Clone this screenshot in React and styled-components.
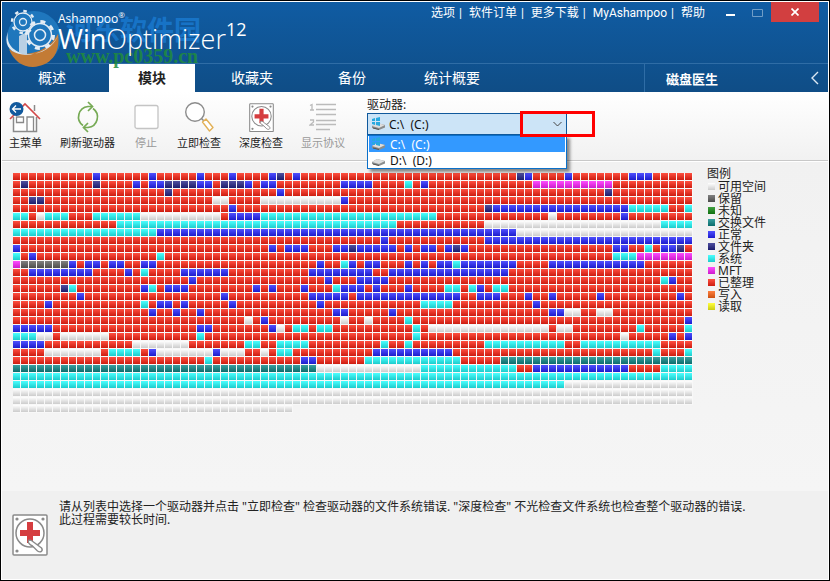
import React from 'react'
import styled, { createGlobalStyle } from 'styled-components'

const GlobalStyle = createGlobalStyle`
  * {
    box-sizing: border-box;
  }
  body {
    margin: 0;
    background: #000;
    color: #222;
    font-family: 'Noto Sans', 'Noto Sans CJK SC', sans-serif;
    font-size: 12px;
  }
  button {
    border: 0;
    padding: 0;
    background: none;
    font: inherit;
  }
  a {
    color: inherit;
    text-decoration: none;
  }
  svg {
    display: block;
  }
`

const Frame = styled.div`
  display: flex;
  flex-direction: column;
  min-height: 100vh;
  border: 1px solid #000;
  padding: 1px;
  background: #fff;
`

const Header = styled.header`
  position: relative;
  background: linear-gradient(#105ca3, #0f4d86);
  color: #fff;
`

const TopBar = styled.div`
  display: flex;
  justify-content: space-between;
  align-items: flex-start;
  height: 61px;
  padding-right: 9px;
`

const Brand = styled.div`
  z-index: 1;
  padding: 9px 0 0 56px;
  font-family: 'Open Sans', sans-serif;
`

const Maker = styled.div`
  font-size: 12px;
  line-height: 14px;

  sup {
    font-size: 8px;
    line-height: 8px;
  }
`

const Product = styled.div`
  display: flex;
  font-size: 27px;
  font-weight: 300;
  line-height: 26px;

  b {
    font-weight: 400;
  }
  sup {
    font-size: 18px;
    font-weight: 400;
    line-height: 6px;
  }
`

const Gears = styled.svg`
  position: absolute;
  left: 3px;
  top: 6px;
`

const Watermark = styled.div`
  position: absolute;
  left: 64px;
  top: 13px;
  color: rgba(28, 132, 224, 0.65);
  font-size: 27px;
  font-weight: 700;
  line-height: 30px;
  white-space: nowrap;
`

const WatermarkUrl = styled.div`
  color: rgba(32, 140, 60, 0.85);
  font-family: 'Liberation Serif', serif;
  font-size: 20px;
  line-height: 22px;
`

const TopRight = styled.div`
  display: flex;
`

const Links = styled.nav`
  display: flex;
  padding-right: 12px;
  font-family: Roboto, 'Noto Sans CJK SC', sans-serif;
  line-height: 22px;

  a + a::before {
    content: '|';
    margin: 0 7px 0 4px;
  }
`

const WinButton = styled.button`
  display: flex;
  align-items: center;
  justify-content: center;
  width: ${({ $close }) => ($close ? '48px' : '27px')};
  height: 20px;
  background: ${({ $close }) => ($close ? '#d23f40' : 'none')};
`

const TabBar = styled.div`
  display: flex;
  justify-content: space-between;
  height: 29px;
  border-top: 1px solid #2f6da6;
`

const Tabs = styled.nav`
  display: grid;
  grid-template-columns: repeat(5, 100px);
  justify-items: center;
`

const Tab = styled.a`
  width: 86px;
  background: ${({ $active }) => ($active ? '#fff' : 'none')};
  color: ${({ $active }) => ($active ? '#222' : '#fff')};
  font-size: 14px;
  font-weight: ${({ $active }) => ($active ? 700 : 400)};
  line-height: 28px;
  text-align: center;
`

const ModuleName = styled.div`
  display: flex;
  justify-content: space-between;
  align-items: center;
  width: 184px;
  padding: 0 9px 0 21px;
  border-left: 1px solid #2f6da6;
  font-size: 13px;
  font-weight: 700;
`

const Toolbar = styled.div`
  display: flex;
  height: 69px;
  padding: 9px 7px 0;
  border-bottom: 1px solid #c8c8c8;
  background: linear-gradient(#fff, #f1f1f1);
`

const Tools = styled.div`
  display: flex;
  gap: 18px;
  align-items: flex-start;
`

const Tool = styled.button`
  display: flex;
  flex-direction: column;
  align-items: center;
  min-width: 26px;
  color: ${({ disabled }) => (disabled ? '#999' : '#222')};
  font-size: 11px;
  line-height: 16px;
  white-space: nowrap;

  svg {
    margin-bottom: 2px;
  }
`

const DriveField = styled.div`
  position: relative;
  width: 200px;
  margin-left: 22px;

  label {
    display: block;
    margin-top: -5px;
    line-height: 17px;
  }
`

const SelectBox = styled.div`
  display: flex;
  align-items: center;
  height: 22px;
  border: 1px solid #10599c;
  background: #cce4f7;
  padding: 0 4px 0 3px;

  select {
    flex: 1;
    appearance: none;
    border: 0;
    padding: 0;
    margin-left: 3px;
    outline: 0;
    background: none;
    color: #111;
    font: inherit;
    font-size: 12px;
  }
`

const Options = styled.ul`
  position: absolute;
  z-index: 1;
  left: 0;
  top: 34px;
  width: 100%;
  margin: 0;
  padding: 0 1px;
  border: 1px solid #0b70c9;
  background: #fff;
  box-shadow: 3px 3px 3px rgba(0, 0, 0, 0.45);
  list-style: none;
`

const Option = styled.li`
  display: flex;
  align-items: center;
  gap: 4px;
  height: 16px;
  padding-left: 2px;
  background: ${({ $selected }) => ($selected ? '#3399ff' : '#fff')};
  color: ${({ $selected }) => ($selected ? '#fff' : '#111')};
`

const Highlight = styled.div`
  position: absolute;
  z-index: 2;
  left: 153px;
  top: 10px;
  width: 75px;
  height: 26px;
  border: 3px solid #f00;
  pointer-events: none;
`

const Content = styled.main`
  display: flex;
  flex: 1;
  gap: 14px;
  align-items: flex-start;
  padding: 11px 11px 10px;
  border-top: 1px solid #fff;
  background: linear-gradient(#f1f1f1, #f5f5f5);
`

const Legend = styled.section`
  h2 {
    margin: -6px 0 2px;
    font-size: 12px;
    font-weight: 400;
    line-height: 14px;
  }
  ul {
    margin: 0;
    padding: 0;
    list-style: none;
  }
  li {
    display: flex;
    gap: 3px;
    height: 12px;
    padding-left: 1px;
    line-height: 8px;
  }
`

const Swatch = styled.span`
  width: 7px;
  height: 7px;
  background: linear-gradient(${({ $from }) => $from}, ${({ $to }) => $to});
`

const Info = styled.footer`
  display: flex;
  gap: 11px;
  min-height: 88px;
  padding: 9px 10px;
  background: #f0f0f0;

  svg {
    margin-top: 14px;
  }
  p {
    margin: 0;
    line-height: 13px;
  }
`

const colors = {
  w: ['#ffffff', '#cccccc'],
  k: ['#808080', '#4c4c4c'],
  g: ['#40a040', '#107010'],
  t: ['#38a0a0', '#0c6c6c'],
  b: ['#5050ff', '#1c1ccc'],
  n: ['#5050a0', '#1c1c6c'],
  c: ['#4cffff', '#1ccccc'],
  m: ['#ff4cff', '#cc1ccc'],
  r: ['#ff5040', '#cc1c10'],
  o: ['#ff8040', '#cc5010'],
  y: ['#ffff40', '#cccc10'],
}

const legend = [
  ['w', '可用空间'],
  ['k', '保留'],
  ['g', '未知'],
  ['t', '交换文件'],
  ['b', '正常'],
  ['n', '文件夹'],
  ['c', '系统'],
  ['m', 'MFT'],
  ['r', '已整理'],
  ['o', '写入'],
  ['y', '读取'],
]

const COLUMNS = 85

// each row starts out all red, the runs are painted over it
const clusterRows = [
  'b10 b17 b23 b27 b32 n33 b35 n63 b64 b69 b77-79',
  'n1 n10 b15 b17-18 n19-22 b23-24 n26-28 b29 b31-32 b41-44 c49 b51 m65-74',
  'n19 b33 n74',
  'n2-3 w25-26 w31-40 b41',
  'b27 n59 b60-76 c77-81 c84',
  'c0-1 w3 c4-6 c10-15 w16-25 b27-30 c31-52 w67 b76',
  'c13-47 w59-80 c81-84',
  'c0-17 b18-62 w63-84',
  'b46 b59-84',
  'b0 b32 b34-36 b40-41 n42 b43-47 b49 b51-52 b54 n55 b56 b75-76 c79 b81-82 n83',
  'c0 b2 c18 c75-77 m78-84',
  'm0 k1-6 b7 b9-10 b12-13 b16-17 b38 c41 b42 b44-45 b49 b51 b53-54 c55 b56-62 b67-78',
  'b2-9 b14 c16 b21-26 b37-44 b47-61',
  'b22 b39 b43-46 c81 b82',
  'n6 c7 b16 c17 b19-21 b30 b32 b36 c40 b41-43 b45 b49 c54-55 c57 b58 c60-61',
  'b8 b26 b37-41 b43-55 b58-60 b64 b67 b73 b83',
  'b4 c16 b18-19 b21 b27 b38 c51-54 b65',
  'b17 b20 b23 b40-41 b47 b67-68 w69-70 w73-74',
  'w29 b31 w41 w44 c49 b84',
  'b0-4 b23-24 b32 w33 c35-36 c38-39 c50 w52-66 w68-69 c78 c84',
  'c0-2 w3-4 w6-11 c23 c50 w76 b82 b84',
  'b0-3 w15-21 c29-30 c33-36 c46 c49 c59-68 c71-80',
  'w4-10 c12-15 b17 w18-24 b25 w26-28 w31 c33-34 b45-54 c80 c84',
  'c24 b36-37 c44-55 t61-84',
  't0-37 w38-50 c51-62 b65-76 c81-84',
  'c0-84',
  'c0-68 w69-84',
  'w0-84',
  'w0-84',
  'w0-34 -35-84',
]

// a run that starts with '-' leaves its cells empty
const expandRow = text => {
  const row = Array(COLUMNS).fill('r')
  text.split(' ').forEach(run => {
    const [from, to = from] = run.slice(1).split('-').map(Number)
    row.fill(run[0], from, to + 1)
  })
  return row
}

const clusters = clusterRows.map(expandRow)

const MapSvg = styled.svg`
  flex-shrink: 0;
`

const DiskMap = () => (
  <MapSvg width="680" height="240" role="img" aria-label="C:">
    <defs>
      {Object.entries(colors).map(([key, [from, to]]) => (
        <linearGradient key={key} id={`cell-${key}`} x1="0" y1="0" x2="0" y2="1">
          <stop offset="0" stopColor={from} />
          <stop offset="1" stopColor={to} />
        </linearGradient>
      ))}
    </defs>
    <g shapeRendering="crispEdges">
      {clusters.map((row, y) =>
        row.map(
          (type, x) =>
            type !== '-' && (
              <g key={`${x}-${y}`}>
                <rect x={x * 8} y={y * 8} width="8" height="8" fill="#f8f8f8" />
                <rect
                  x={x * 8}
                  y={y * 8}
                  width="7"
                  height="7"
                  fill={`url(#cell-${type})`}
                />
              </g>
            )
        )
      )}
    </g>
  </MapSvg>
)

const LogoIcon = () => (
  <Gears width="58" height="60" viewBox="0 0 58 60" fill="none">
    <circle cx="29" cy="30" r="27" fill="#2482c8" opacity="0.75" />
    <path d="M4 41c12 9 37 6 49-15 3 20-8 32-25 33C17 59 8 52 4 41z" fill="#c37b35" />
    <path d="M3 24C-8 52 40 56 54 26 42 56-2 50 3 24z" fill="#dce7f1" />
    <path d="M14 28l8-4v23l-8-2z" fill="#b9d0e4" />
    <g stroke="#e4edf5">
      <circle cx="18" cy="14" r="9" strokeWidth="1.300" />
      <circle cx="18" cy="14" r="11" strokeWidth="2.500" strokeDasharray="3.500 5.140" />
      <circle cx="18" cy="14" r="3.500" strokeWidth="1.300" />
      <circle cx="35" cy="27" r="11.500" strokeWidth="1.500" />
      <circle cx="35" cy="27" r="13.500" strokeWidth="3" strokeDasharray="5 5.600" />
      <circle cx="35" cy="27" r="5.500" strokeWidth="1.500" />
    </g>
  </Gears>
)

const HomeIcon = () => (
  <svg width="33" height="32" viewBox="0 0 33 32" fill="none">
    <path d="M4.500 15v15.500h23V15L16 4z" fill="#fff" />
    <path d="M4.500 16v14.500h23V16M25.500 10V4" stroke="#8a8a8a" strokeWidth="1.500" />
    <path d="M7.500 16h7v5.500h-7zM18 30V16h6.500v14" stroke="#8a8a8a" strokeWidth="1.300" />
    <path d="M1 18L16 3l15 15" stroke="#d2494a" strokeWidth="1.600" />
    <circle cx="7.500" cy="8" r="7" fill="#125a9e" />
    <path d="M12 8H3.500M7 4.500L3.500 8 7 11.500" stroke="#fff" strokeWidth="1.300" />
  </svg>
)

const RefreshIcon = () => (
  <svg width="26" height="32" viewBox="0 0 26 32" fill="none" stroke="#76aa55" strokeWidth="1.700">
    <path d="M8 24.500A10.500 10.500 0 0 1 13 5.500h4M18 7.500A10.500 10.500 0 0 1 13 26.500H9" />
    <path d="M13 1l4.500 4.500L13 10M13 22l-4.500 4.500L13 31" />
  </svg>
)

const StopIcon = () => (
  <svg width="26" height="32" viewBox="0 0 26 32">
    <rect x="2" y="4.500" width="23" height="23" rx="2" fill="#fff" stroke="#c4c4c4" strokeWidth="1.300" />
  </svg>
)

const SearchIcon = () => (
  <svg width="30" height="32" viewBox="0 0 30 32" fill="none">
    <circle cx="11" cy="11" r="9.300" fill="#fff" stroke="#8c8c8c" strokeWidth="1.400" />
    <path d="M17.500 17.500l2.500 2.500" stroke="#8c8c8c" strokeWidth="1.500" />
    <path d="M18.500 21l3.500-3 7 8.500-3.500 3.500z" fill="#fff" stroke="#e2b056" strokeWidth="1.400" strokeLinejoin="round" />
  </svg>
)

const DiskCheckArt = () => (
  <>
    <rect x="1" y="1" width="34" height="40" rx="1" fill="#fff" stroke="#8a8a8a" strokeWidth="1.500" />
    <circle cx="18" cy="19" r="14" stroke="#8a8a8a" strokeWidth="1.500" />
    <path d="M15 8h6v8h7v6h-7v7h-6v-7H8v-6h7z" fill="#d53d3f" />
    <path
      d="M16.500 26.500c2-1 3.500 0 5 1.500l8 6c2 3-1 5-4 3l-5-5c-3-1.500-5-3-4-5.500z"
      fill="#fff"
      stroke="#8a8a8a"
      strokeWidth="1.400"
    />
    <g fill="#8a8a8a">
      <circle cx="5" cy="5" r="1.600" />
      <circle cx="31" cy="5" r="1.600" />
      <circle cx="5" cy="37" r="1.600" />
    </g>
  </>
)

const DiskCheckIcon = () => (
  <svg width="25" height="32" viewBox="0 -3 36 46" fill="none">
    <DiskCheckArt />
  </svg>
)

const ListIcon = () => (
  <svg width="28" height="32" viewBox="0 0 28 32" fill="none" stroke="#bbb" strokeWidth="1.500">
    <path d="M7 3.500h20M7 8.500h20M7 13.500h20M7 19.500h20M7 23.500h20M7 28.500h14" />
    <path d="M1 4.500l2-1V9M1 9h4M1 19h3.500v2L1 24h4" strokeWidth="1.300" />
  </svg>
)

const DriveIcon = ({ system }) => (
  <svg width="15" height="14" viewBox="0 0 15 14">
    <path d="M1 9l5-3 8 2v2.500L8 13 1 11z" fill="#8b8d8d" />
    <path d="M1 9l5-3 8 2-6 3z" fill="#dedede" />
    <path d="M2 11l6 1.500" stroke="#555" />
    {system && <path d="M1 2l3-1v3H1zM5 1l4-1v4H5zM1 5h3v3L1 7zM5 5h4v4L5 8z" fill="#28a9df" />}
  </svg>
)

const ChevronDown = () => (
  <svg width="9" height="6" viewBox="0 0 9 6" fill="none" stroke="#444">
    <path d="M.5 1l4 4 4-4" />
  </svg>
)

const links = ['选项', '软件订单', '更多下载', 'MyAshampoo', '帮助']
const tabs = ['概述', '模块', '收藏夹', '备份', '统计概要']

const tools = [
  { name: '主菜单', icon: <HomeIcon /> },
  { name: '刷新驱动器', icon: <RefreshIcon /> },
  { name: '停止', icon: <StopIcon />, disabled: true },
  { name: '立即检查', icon: <SearchIcon /> },
  { name: '深度检查', icon: <DiskCheckIcon /> },
  { name: '显示协议', icon: <ListIcon />, disabled: true },
]

const drives = ['C:\\\u00a0 (C:)', 'D:\\\u00a0 (D:)']

const AppHeader = () => (
  <Header>
    <LogoIcon />
    <Watermark>
      河东软件园
      <WatermarkUrl>www.pc0359.cn</WatermarkUrl>
    </Watermark>
    <TopBar>
      <Brand>
        <Maker>
          Ashampoo<sup>®</sup>
        </Maker>
        <Product>
          <b>Win</b>Optimizer<sup>12</sup>
        </Product>
      </Brand>
      <TopRight>
        <Links>
          {links.map(link => (
            <a href="#" key={link}>
              {link}
            </a>
          ))}
        </Links>
        <WinButton aria-label="最小化">
          <svg width="9" height="10">
            <path d="M0 8h9" stroke="#fff" strokeWidth="2" />
          </svg>
        </WinButton>
        <WinButton aria-label="最大化" disabled>
          <svg width="11" height="9">
            <path d="M.5 1.500h10v7H.5z" fill="none" stroke="#6f9dc7" />
          </svg>
        </WinButton>
        <WinButton $close aria-label="关闭">
          <svg width="8" height="8">
            <path d="M.5.5l7 7M7.500.5l-7 7" stroke="#fff" strokeWidth="1.700" />
          </svg>
        </WinButton>
      </TopRight>
    </TopBar>
    <TabBar>
      <Tabs>
        {tabs.map(tab => (
          <Tab href="#" key={tab} $active={tab === '模块'}>
            {tab}
          </Tab>
        ))}
      </Tabs>
      <ModuleName>
        磁盘医生
        <svg width="8" height="14" fill="none" stroke="#dce8f3" strokeWidth="1.400">
          <path d="M7 1L1 7l6 6" />
        </svg>
      </ModuleName>
    </TabBar>
  </Header>
)

const DriveSelect = () => (
  <DriveField>
    <label htmlFor="drive">驱动器:</label>
    <SelectBox>
      <DriveIcon system />
      <select id="drive" defaultValue={drives[0]}>
        {drives.map(drive => (
          <option key={drive} value={drive}>
            {drive}
          </option>
        ))}
      </select>
      <ChevronDown />
    </SelectBox>
    <Options>
      {drives.map((drive, index) => (
        <Option key={drive} $selected={index === 0}>
          <DriveIcon system={index === 0} />
          {drive}
        </Option>
      ))}
    </Options>
    <Highlight />
  </DriveField>
)

const App = () => (
  <>
    <GlobalStyle />
    <Frame>
      <AppHeader />
      <Toolbar>
        <Tools>
          {tools.map(({ name, icon, disabled }) => (
            <Tool key={name} disabled={disabled}>
              {icon}
              {name}
            </Tool>
          ))}
        </Tools>
        <DriveSelect />
      </Toolbar>
      <Content>
        <DiskMap />
        <Legend>
          <h2>图例</h2>
          <ul>
            {legend.map(([key, name]) => (
              <li key={key}>
                <Swatch $from={colors[key][0]} $to={colors[key][1]} />
                {name}
              </li>
            ))}
          </ul>
        </Legend>
      </Content>
      <Info>
        <svg width="36" height="42" viewBox="0 0 36 42" fill="none">
          <DiskCheckArt />
        </svg>
        <p>
          请从列表中选择一个驱动器并点击 "立即检查" 检查驱动器的文件系统错误. "深度检查"
          不光检查文件系统也检查整个驱动器的错误.
          <br />
          此过程需要较长时间.
        </p>
      </Info>
    </Frame>
  </>
)

export default App
